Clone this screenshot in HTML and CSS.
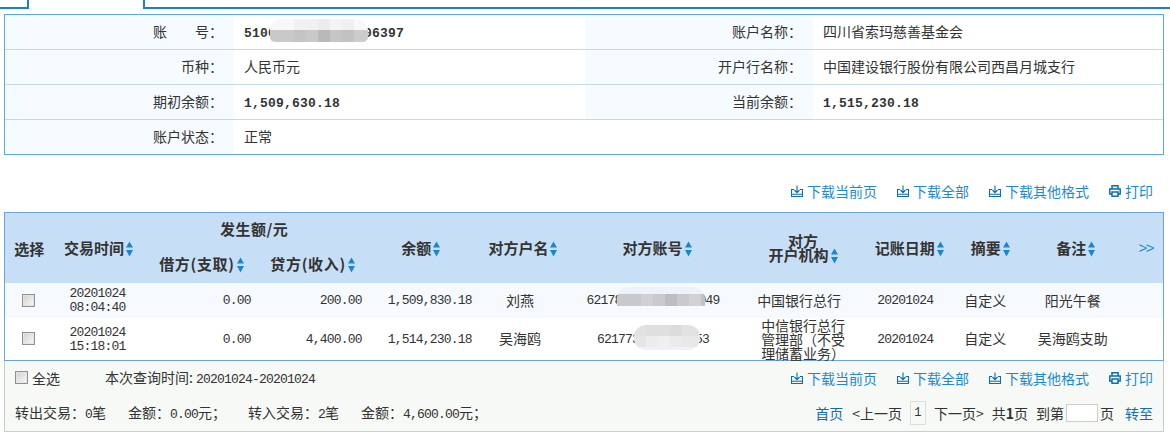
FILE: index.html
```html
<!DOCTYPE html>
<html lang="zh-CN">
<head>
<meta charset="utf-8">
<title>账户明细</title>
<link rel="stylesheet" href="styles.css">
</head>
<body>
<svg class="defs" aria-hidden="true">
  <symbol id="sort" viewBox="0 0 7 16"><path d="M3.5 0.5 7 6.5H0Z M0 9H7L3.5 15.5Z"/></symbol>
  <symbol id="dl" viewBox="0 0 12 12"><path d="M6 0.5V7.2M3.4 5 6 7.7 8.6 5M3 4.5H0.5V11.5H11.5V4.5H9M0.5 9.3H11.5" fill="none" stroke="currentColor" stroke-width="1.1"/></symbol>
  <symbol id="pr" viewBox="0 0 12 12"><path d="M3 4V0.8H9V4M3 9H0.8V4H11.2V9H9M3 7H9V11.2H3Z" fill="none" stroke="currentColor" stroke-width="1.5"/></symbol>
</svg>

<div class="tabs"><div class="tab-left"></div><div class="tab-active"></div><div class="tab-rest"></div></div>

<table class="info">
  <colgroup><col class="ic1"><col class="ic2"><col class="ic3"><col class="ic4"></colgroup>
  <tr><th>账　　号：</th><td><span class="strongnum acct">51001000000000006397<i class="mask mask-a"></i></span></td><th>账户名称：</th><td>四川省索玛慈善基金会</td></tr>
  <tr><th>币种：</th><td>人民币元</td><th>开户行名称：</th><td>中国建设银行股份有限公司西昌月城支行</td></tr>
  <tr><th>期初余额：</th><td><span class="strongnum">1,509,630.18</span></td><th>当前余额：</th><td><span class="strongnum">1,515,230.18</span></td></tr>
  <tr class="last"><th>账户状态：</th><td>正常</td><td class="blank" colspan="2"></td></tr>
</table>

<div class="actions top-actions">
  <a><svg class="ico"><use href="#dl"/></svg>下载当前页</a>
  <a><svg class="ico"><use href="#dl"/></svg>下载全部</a>
  <a><svg class="ico"><use href="#dl"/></svg>下载其他格式</a>
  <a><svg class="ico"><use href="#pr"/></svg>打印</a>
</div>

<table class="list">
  <colgroup><col class="c1"><col class="c2"><col class="c3"><col class="c3"><col class="c5"><col class="c6"><col class="c7"><col class="c8"><col class="c6"><col class="c10"><col class="c11"><col class="c12"></colgroup>
  <thead>
    <tr>
      <th rowspan="2" class="main">选择</th>
      <th rowspan="2" class="main pl4">交易时间<svg class="sort"><use href="#sort"/></svg></th>
      <th colspan="2" class="group">发生额/元</th>
      <th rowspan="2" class="main">余额<svg class="sort"><use href="#sort"/></svg></th>
      <th rowspan="2" class="main pr4">对方户名<svg class="sort"><use href="#sort"/></svg></th>
      <th rowspan="2" class="main pl4">对方账号<svg class="sort"><use href="#sort"/></svg></th>
      <th rowspan="2" class="main tight pl6">对方<br>开户机构<svg class="sort"><use href="#sort"/></svg></th>
      <th rowspan="2" class="main pl8">记账日期<svg class="sort"><use href="#sort"/></svg></th>
      <th rowspan="2" class="main">摘要<svg class="sort"><use href="#sort"/></svg></th>
      <th rowspan="2" class="main pr4">备注<svg class="sort"><use href="#sort"/></svg></th>
      <th rowspan="2" class="more">&gt;&gt;</th>
    </tr>
    <tr>
      <th class="sub">借方(支取)<svg class="sort"><use href="#sort"/></svg></th>
      <th class="sub">贷方(收入)<svg class="sort"><use href="#sort"/></svg></th>
    </tr>
  </thead>
  <tbody>
    <tr class="odd">
      <td class="sel"><input class="check" type="checkbox"></td>
      <td class="num tight when">20201024<br>08:04:40</td>
      <td class="num r">0.00</td>
      <td class="num r">200.00</td>
      <td class="num r r8">1,509,830.18</td>
      <td class="off10">刘燕</td>
      <td class="num off4"><span class="acct">6217800000000000049<i class="mask mask-b"></i></span></td>
      <td class="off2">中国银行总行</td>
      <td class="num">20201024</td>
      <td class="off10">自定义</td>
      <td class="off10">阳光午餐</td>
      <td></td>
    </tr>
    <tr class="even">
      <td class="sel"><input class="check" type="checkbox"></td>
      <td class="num tight when">20201024<br>15:18:01</td>
      <td class="num r">0.00</td>
      <td class="num r">4,400.00</td>
      <td class="num r r8">1,514,230.18</td>
      <td class="off10">吴海鸥</td>
      <td class="num off4"><span class="acct">6217730000000053<i class="mask mask-c"></i></span></td>
      <td class="tight org">中信银行总行<br>管理部（不受<br>理储蓄业务）</td>
      <td class="num">20201024</td>
      <td class="off10">自定义</td>
      <td class="off10">吴海鸥支助</td>
      <td></td>
    </tr>
  </tbody>
</table>

<div class="foot">
  <div class="foot-row">
    <label class="all"><input class="check" type="checkbox">全选</label>
    <span class="query">本次查询时间:<span class="mono range">20201024-20201024</span></span>
    <div class="actions">
      <a><svg class="ico"><use href="#dl"/></svg>下载当前页</a>
      <a><svg class="ico"><use href="#dl"/></svg>下载全部</a>
      <a><svg class="ico"><use href="#dl"/></svg>下载其他格式</a>
      <a><svg class="ico"><use href="#pr"/></svg>打印</a>
    </div>
  </div>
  <div class="foot-row">
    <div class="sums">
      <span>转出交易：<span class="mono">0</span>笔</span>
      <span>金额：<span class="mono">0.00</span>元；</span>
      <span>转入交易：<span class="mono">2</span>笔</span>
      <span>金额：<span class="mono">4,600.00</span>元；</span>
    </div>
    <nav class="pager">
      <a class="first">首页</a>
      <span class="arrowed">&lt;上一页</span>
      <span class="cur">1</span>
      <span class="arrowed">下一页&gt;</span>
      <span>共<b>1</b>页</span>
      <span class="goto">到第<span class="pagebox"></span>页</span>
      <a class="go">转至</a>
    </nav>
  </div>
</div>
</body>
</html>
```
FILE: styles.css
```css
* { box-sizing: border-box; }
html, body { margin: 0; padding: 0; }
body {
  width: 1170px;
  height: 436px;
  overflow: hidden;
  background: #fff;
  color: #333;
  font: 14px/1.2 "Noto Sans CJK SC", "Liberation Sans", sans-serif;
}
.defs { position: absolute; width: 0; height: 0; }

.tabs { display: flex; height: 9px; }
.tab-left { width: 29px; border-right: 2px solid #1a82cc; border-bottom: 2px solid #1a82cc; }
.tab-active { width: 114px; }
.tab-rest { flex: 1; border-left: 2px solid #1a82cc; border-bottom: 2px solid #1a82cc; }

table { border-collapse: collapse; table-layout: fixed; }

.info {
  display: table;
  width: 1160px;
  margin: 5px 0 0 4px;
  border: 1px solid #5ca8e4;
  border-collapse: separate;
  border-spacing: 0;
}
.ic1 { width: 229px; }
.ic2 { width: 351px; }
.ic3 { width: 228px; }
.info tr { height: 35px; }
.info tr.last { height: 34px; }
.info th, .info td { padding: 0 0 2px; border-bottom: 1px solid #c6d9e8; }
.info .last th, .info .last td { border-bottom: 0; }
.info th { background: #f6fbff; font-weight: 400; text-align: right; padding-right: 11px; }
.info td { padding-left: 10px; }
.info td.blank { background: #fff; }

.strongnum {
  font: 700 13px/1 "Liberation Mono", monospace;
  letter-spacing: 0.2px;
}
.acct { position: relative; display: inline-block; white-space: nowrap; }
.mask { position: absolute; display: block; overflow: hidden; }
.mask-a {
  left: 26px; top: -8px; width: 98px; height: 23px; border-radius: 12px 12px 5px 5px;
  background:
    linear-gradient(90deg, #c9c9c9 0 24px, #c4c4c4 24px 36px, #c9c9c9 36px 48px, #b9b9b9 48px 60px, #c6c6c6 60px 72px, #c2c2c2 72px 84px, #cccccc 84px) left bottom / 100% 52% no-repeat,
    linear-gradient(90deg, #f8f8f8 0 24px, #f1f1f1 24px 48px, #ececec 48px 60px, #f4f4f4 60px 72px, #f0f0f0 72px 84px, #f8f8f8 84px);
}
.mask-b {
  left: 31px; top: -7px; width: 88px; height: 19px; border-radius: 12px 12px 0 0;
  background:
    linear-gradient(90deg, #c7c9cd 0 24px, #cfd1d4 24px 36px, #c8cacd 36px 48px, #bcbdc0 48px 60px, #c8cacd 60px 72px, #d0d2d5 72px 84px, #c0c2c5 84px) left bottom / 100% 63% no-repeat,
    #eef3fb;
}
.mask-c {
  left: 37px; top: -8px; width: 66px; height: 25px; border-radius: 12px;
  background:
    linear-gradient(90deg, #e2e2e2 0 12px, #dfdfdf 12px 36px, #dcdcdc 36px 48px, #e2e2e2 48px) left top / 100% 45% no-repeat,
    linear-gradient(90deg, #e6e6e6 0 12px, #ececec 12px 24px, #efefef 24px 36px, #ebebeb 36px 48px, #e8e8e8 48px) left 11px / 100% 44% no-repeat,
    #eef2f8;
}

.actions { display: flex; gap: 20px; color: #1b8ad2; }
.actions a { display: flex; align-items: center; }
.ico { width: 12px; height: 12px; margin-right: 4px; color: #0a6db5; }
.top-actions { justify-content: flex-end; height: 57px; padding: 25px 11px 0 0; width: 1164px; line-height: 22px; }
.top-actions a { height: 22px; }

.list {
  display: table;
  width: 1160px;
  margin-left: 4px;
  border: 1px solid #6ba3df;
}
.c1 { width: 49px; } .c2 { width: 86px; } .c3 { width: 111px; } .c5 { width: 118px; }
.c6 { width: 90px; } .c7 { width: 170px; } .c8 { width: 120px; } .c10 { width: 80px; }
.c11 { width: 95px; } .c12 { width: 38px; }
.list th { background: #c7dff6; height: 35px; padding: 0; font-size: 15px; font-weight: 700; text-align: center; color: #333; line-height: 14px; }
.list th.main { padding-top: 2px; }
.list th.pl4 { padding-left: 4px; }
.list th.pl6 { padding-left: 6px; }
.list th.pl8 { padding-left: 8px; }
.list th.pr4 { padding-right: 4px; }
.list th.group { padding: 0 0 2px 7px; letter-spacing: .5px; }
.list th.sub { text-align: right; padding-right: 7px; letter-spacing: .7px; }
.list th.more { color: #1b8ad2; font: 400 15px "Liberation Sans", sans-serif; letter-spacing: -1.5px; padding: 0 0 0 3px; }
.list td { padding: 0; text-align: center; vertical-align: middle; }
.odd td { background: #f6fafe; height: 35px; }
.even td { height: 42px; }
.list td.off10 { padding-right: 10px; }
.list td.off4 { padding-right: 4px; }
.list td.off2 { padding-right: 2px; }
.list td.org { padding-left: 6px; }
.list td.when { padding-left: 2px; }
.tight { line-height: 14px; }
.num { font: 13px/14px "Liberation Mono", monospace; letter-spacing: -.8px; }
.list td.num { padding-top: 2px; }
.num.r { text-align: right; }
.list td.r8 { padding-right: 8px; }
.sort { width: 7px; height: 16px; margin-left: 2px; vertical-align: -3px; fill: #1a86d0; }

.check {
  appearance: none;
  -webkit-appearance: none;
  display: block;
  width: 13px;
  height: 13px;
  margin: 0;
  border: 1px solid #909090;
  background: linear-gradient(135deg, #d0d0d0, #fafafa);
  box-shadow: inset 0 0 0 1px #e4e4e4;
}
.list td.sel { padding-left: 17px; }

.foot {
  width: 1160px;
  height: 71px;
  margin-left: 4px;
  background: #f6f9f5;
  border: solid #ccc;
  border-width: 0 1px 1px;
}
.foot-row { display: flex; align-items: center; height: 35px; padding: 0 10px; position: relative; }
.foot-row .actions { margin-left: auto; }
.all { display: flex; align-items: center; gap: 4px; }
.query { margin-left: 45px; }
.mono { font: 13px "Liberation Mono", monospace; letter-spacing: -.8px; }
.range { margin-left: 3px; }
.sums { display: flex; gap: 22px; }
.pager { margin-left: auto; display: flex; align-items: center; gap: 8px; }
.pager a { color: #0d6eb5; }
.pager .first { margin-right: 1px; }
.arrowed { white-space: nowrap; }
.cur { display: flex; align-items: center; justify-content: center; width: 16px; height: 24px; border: 1px solid #ddd; font: 12px "Liberation Mono", monospace; }
.goto { display: flex; align-items: center; gap: 2px; }
.pagebox { display: block; width: 32px; height: 18px; background: #fff; border: 1px solid #ccc; }
.pager .go { margin-left: 3px; }
```
